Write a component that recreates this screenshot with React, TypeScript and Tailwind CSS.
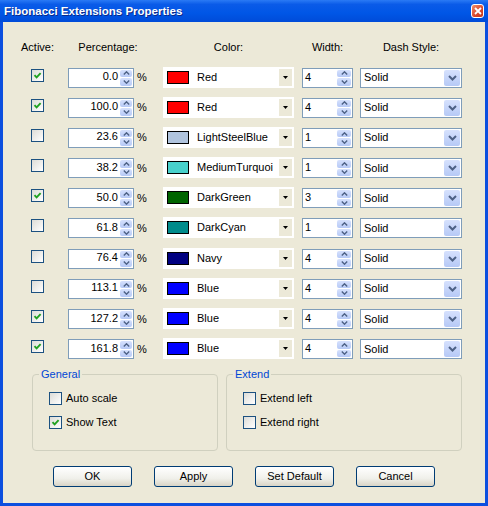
import React from 'react';

type Level = {
  on: boolean;
  pct: string;
  swatch: string;
  name: string;
  width: string;
};

const levels: Level[] = [
  { on: true, pct: '0.0', swatch: 'bg-[#ff0000]', name: 'Red', width: '4' },
  { on: true, pct: '100.0', swatch: 'bg-[#ff0000]', name: 'Red', width: '4' },
  { on: false, pct: '23.6', swatch: 'bg-[#b0c4de]', name: 'LightSteelBlue', width: '1' },
  { on: false, pct: '38.2', swatch: 'bg-[#48d1cc]', name: 'MediumTurquoi', width: '1' },
  { on: true, pct: '50.0', swatch: 'bg-[#006400]', name: 'DarkGreen', width: '3' },
  { on: false, pct: '61.8', swatch: 'bg-[#008b8b]', name: 'DarkCyan', width: '1' },
  { on: false, pct: '76.4', swatch: 'bg-[#000080]', name: 'Navy', width: '4' },
  { on: false, pct: '113.1', swatch: 'bg-[#0000ff]', name: 'Blue', width: '4' },
  { on: true, pct: '127.2', swatch: 'bg-[#0000ff]', name: 'Blue', width: '4' },
  { on: true, pct: '161.8', swatch: 'bg-[#0000ff]', name: 'Blue', width: '4' },
];

function CheckBox({ on }: { on: boolean }) {
  return (
    <span className="flex h-[13px] w-[13px] shrink-0 items-center justify-center border border-[#1c5180] bg-[linear-gradient(135deg,#dcdcd7,#ffffff)]">
      {on && (
        <svg width="9" height="9" viewBox="0 0 9 9">
          <path d="M1.5 4.2 L3.6 6.4 L7.6 2.2" fill="none" stroke="#21a121" strokeWidth="1.9" />
        </svg>
      )}
    </span>
  );
}

// small up/down spinner used by the numeric boxes
function Spin({ wide }: { wide?: boolean }) {
  return (
    <div className={`my-px mr-px flex flex-col gap-px ${wide ? 'w-[14px]' : 'w-[12px]'}`}>
      <div className="flex flex-1 items-center justify-center rounded-[2px] bg-[linear-gradient(to_bottom,#d6e1fd,#b6c9f6)]">
        <svg width="7" height="4" viewBox="0 0 7 4">
          <path d="M0.8 3.5 L3.5 0.8 L6.2 3.5" fill="none" stroke="#4d6185" strokeWidth="1.4" />
        </svg>
      </div>
      <div className="flex flex-1 items-center justify-center rounded-[2px] bg-[linear-gradient(to_bottom,#d6e1fd,#b6c9f6)]">
        <svg width="7" height="4" viewBox="0 0 7 4">
          <path d="M0.8 0.5 L3.5 3.2 L6.2 0.5" fill="none" stroke="#4d6185" strokeWidth="1.4" />
        </svg>
      </div>
    </div>
  );
}

function Button({ label }: { label: string }) {
  return (
    <button className="h-[21px] w-[79px] rounded-[3px] border border-[#003c74] bg-[linear-gradient(to_bottom,#ffffff,#f0f0ea_60%,#d8d4c6)] text-[11px] text-black">
      {label}
    </button>
  );
}

export default function App() {
  return (
    <div className="flex h-[506px] w-[488px] flex-col bg-[#0b4fdf] font-['Liberation_Sans',Arial,sans-serif] text-[11px] leading-[13px] text-black">
      {/* Title bar */}
      <div className="flex h-[22px] shrink-0 items-center bg-[linear-gradient(to_bottom,#2a7af5_0%,#0a5be8_20%,#0056e6_60%,#004bd8_100%)] pl-[4px] pr-[4px]">
        <span className="pt-[1px] text-[11.5px] font-bold text-white [text-shadow:1px_1px_#0a2a8a]">
          Fibonacci Extensions Properties
        </span>
        <div className="ml-auto flex h-[14px] w-[13px] items-center justify-center rounded-[3px] border border-white bg-[linear-gradient(135deg,#ef8f6b,#d9452a_60%,#c23a1d)]">
          <svg width="8" height="8" viewBox="0 0 8 8">
            <path d="M1 1 L7 7 M7 1 L1 7" stroke="#ffffff" strokeWidth="1.8" />
          </svg>
        </div>
      </div>

      {/* Body */}
      <div className="mx-[3px] mb-[3px] flex flex-1 flex-col bg-[#ece9d8]">
        {/* Column headers */}
        <div className="mt-[19px] flex pl-[15px]">
          <div className="w-[39px] text-center">Active:</div>
          <div className="ml-[11px] w-[80px] text-center">Percentage:</div>
          <div className="ml-[15px] w-[131px] text-center">Color:</div>
          <div className="ml-[8px] w-[51px] text-center">Width:</div>
          <div className="ml-[7px] w-[102px] text-center">Dash Style:</div>
        </div>

        {/* Level rows */}
        <div className="mt-[13.5px] flex flex-col gap-[10.2px] pl-[15px]">
          {levels.map((lv, i) => (
            <div key={i} className="flex h-[20px] items-start">
              <div className="flex w-[39px] justify-center pt-px">
                <CheckBox on={lv.on} />
              </div>

              <div className="ml-[11px] flex w-[80px] items-center">
                <div className="flex h-[20px] w-[66px] border border-[#7f9db9] bg-white">
                  <span className="flex flex-1 items-center justify-end pb-[2px] pr-[2px]">{lv.pct}</span>
                  <Spin />
                </div>
                <span className="ml-[3px]">%</span>
              </div>

              <div className="ml-[15px] -mt-px flex h-[21px] w-[131px] items-center bg-white p-[2px]">
                <span className={`ml-[2px] h-[13px] w-[22px] border border-black ${lv.swatch}`} />
                <span className="ml-[8px] whitespace-nowrap">{lv.name}</span>
                <span className="ml-auto flex h-full w-[13px] items-center justify-center bg-[#ece9d8]">
                  <svg width="5" height="3" viewBox="0 0 5 3">
                    <path d="M0 0 H5 L2.5 3 Z" fill="#000000" />
                  </svg>
                </span>
              </div>

              <div className="ml-[8px] flex h-[20px] w-[51px] border border-[#7f9db9] bg-white">
                <span className="flex-1 pl-[2px] pt-[2px]">{lv.width}</span>
                <Spin wide />
              </div>

              <div className="ml-[7px] flex h-[20px] w-[102px] border border-[#7f9db9] bg-white">
                <span className="flex flex-1 items-center pl-[3px]">Solid</span>
                <span className="my-px mr-px flex w-[16px] items-center justify-center rounded-[2px] bg-[linear-gradient(to_bottom,#d6e1fd,#b6c9f6)]">
                  <svg width="9" height="6" viewBox="0 0 9 6">
                    <path d="M1 1 L4.5 4.5 L8 1" fill="none" stroke="#4d6185" strokeWidth="2" />
                  </svg>
                </span>
              </div>
            </div>
          ))}
        </div>

        {/* Group boxes */}
        <div className="mt-[9px] flex gap-[8px] pl-[29px]">
          <fieldset className="h-[83px] w-[186px] rounded-[4px] border border-[#d0d0bf] px-[6px]">
            <legend className="px-[2px] text-[#0046d5]">General</legend>
            <div className="flex flex-col gap-[11px] pl-[10px] pt-[11px]">
              <label className="flex items-center gap-[4px]">
                <CheckBox on={false} />
                <span>Auto scale</span>
              </label>
              <label className="flex items-center gap-[4px]">
                <CheckBox on />
                <span>Show Text</span>
              </label>
            </div>
          </fieldset>
          <fieldset className="h-[83px] w-[236px] rounded-[4px] border border-[#d0d0bf] px-[6px]">
            <legend className="px-[2px] text-[#0046d5]">Extend</legend>
            <div className="flex flex-col gap-[11px] pl-[10px] pt-[11px]">
              <label className="flex items-center gap-[4px]">
                <CheckBox on={false} />
                <span>Extend left</span>
              </label>
              <label className="flex items-center gap-[4px]">
                <CheckBox on={false} />
                <span>Extend right</span>
              </label>
            </div>
          </fieldset>
        </div>

        {/* Buttons */}
        <div className="mt-[15px] flex gap-[22px] pl-[50px]">
          <Button label="OK" />
          <Button label="Apply" />
          <Button label="Set Default" />
          <Button label="Cancel" />
        </div>
      </div>
    </div>
  );
}
